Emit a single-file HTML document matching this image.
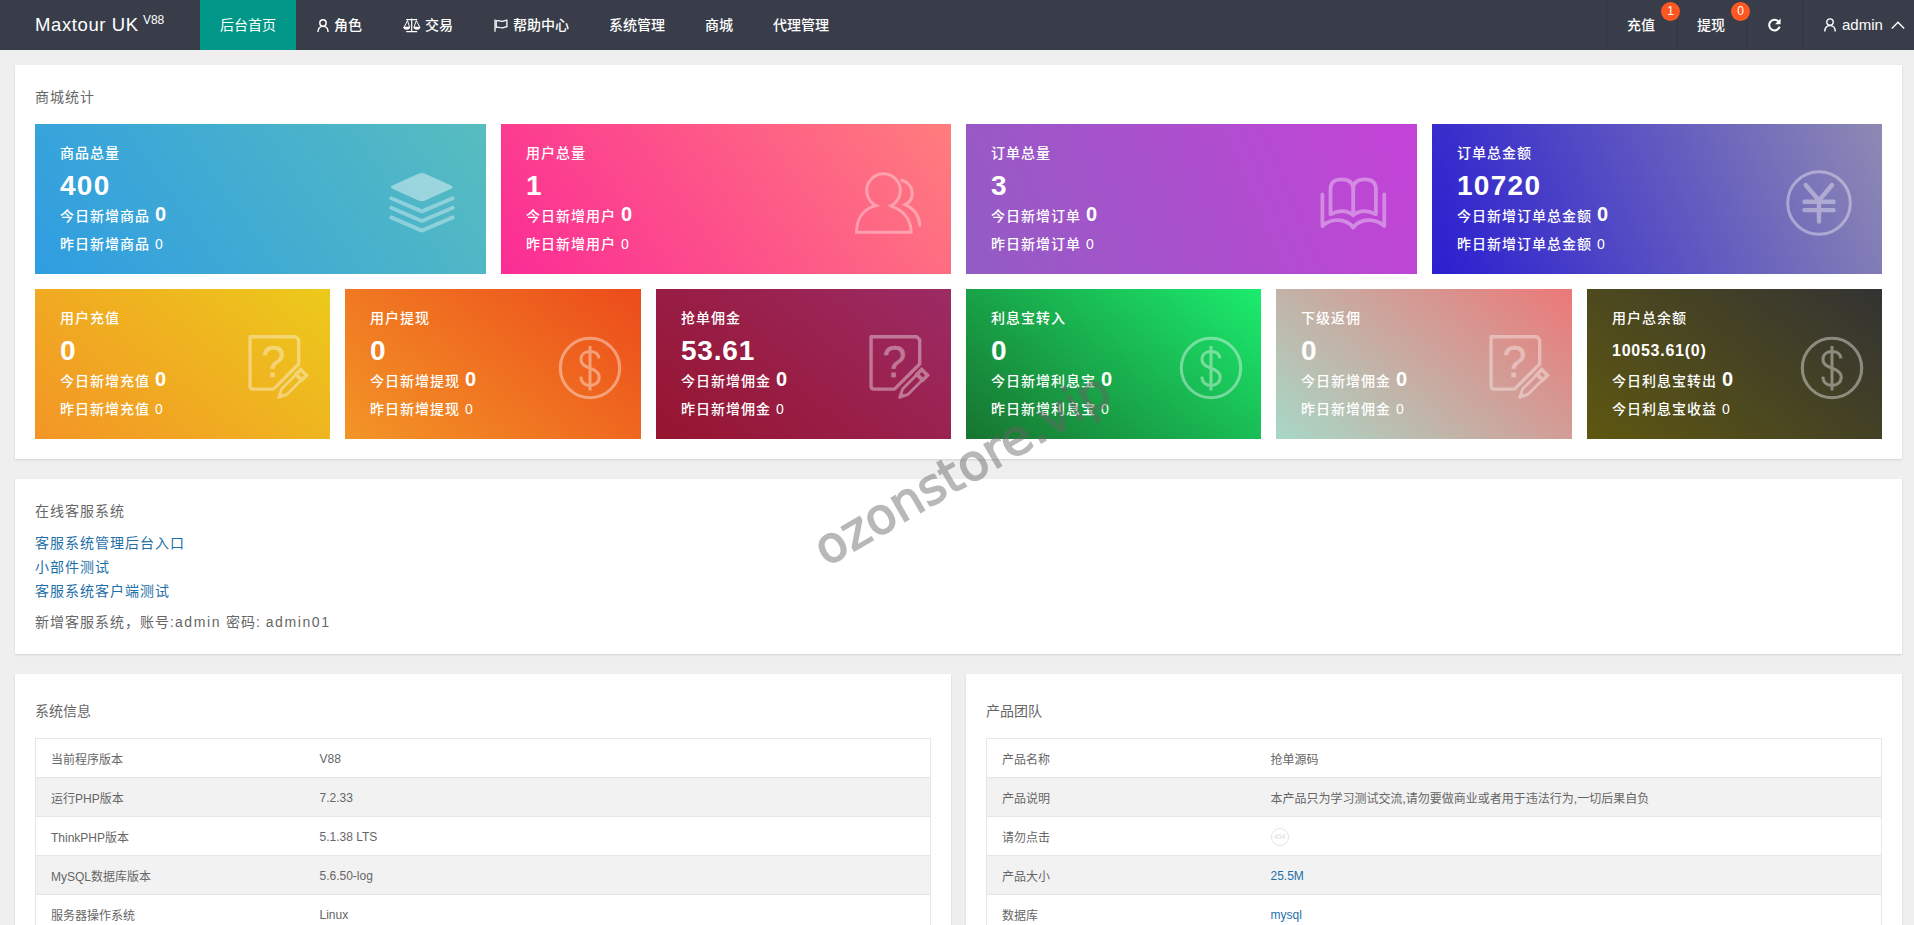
<!DOCTYPE html>
<html lang="zh-CN">
<head>
<meta charset="utf-8">
<title>Maxtour UK</title>
<style>
*{box-sizing:border-box;margin:0;padding:0}
html,body{width:1914px;height:925px;overflow:hidden}
body{background:#efefef;font-family:"Liberation Sans","Noto Sans CJK SC",sans-serif;font-size:14px;color:#666;position:relative}
a{color:#1e6fa8;text-decoration:none}
/* ---------- header ---------- */
.header{position:absolute;left:0;top:0;width:1914px;height:50px;background:#393d49;color:#fff}
.logo{position:absolute;left:35px;top:0;height:50px;line-height:49px;font-size:18.5px;letter-spacing:.6px;color:#fff;white-space:nowrap}
.logo sup{font-size:12px;position:relative;top:-7px;left:-1.5px;letter-spacing:0;vertical-align:baseline}
.nav{position:absolute;left:200px;top:0;height:50px;list-style:none;display:flex}
.nav li{height:50px;line-height:50px;padding:0 20px;font-size:14px;color:#fff;white-space:nowrap;display:flex;align-items:center}
.nav li{font-weight:500}
.nav li.on{background:#009688;font-weight:400}
.nav li svg{display:block;margin-right:5px}
.rnav{position:absolute;top:0;height:50px;line-height:50px;font-size:14px;color:#fff;white-space:nowrap}
.sep{position:absolute;top:0;width:1px;height:50px;background:#333641}
.badge{position:absolute;top:1.5px;width:19px;height:19px;border-radius:10px;z-index:2;background:#ff5722;color:#fff;font-size:12px;line-height:19px;text-align:center}
/* ---------- panels ---------- */
.panel{position:absolute;background:#fff;box-shadow:0 1px 2px rgba(0,0,0,.12)}
.ptitle{position:absolute;left:20px;font-size:14px;color:#666;white-space:nowrap}
.ls{letter-spacing:1px}
/* ---------- cards ---------- */
.card{position:absolute;height:150px;color:#fff;letter-spacing:1px;overflow:hidden}
.card div{position:absolute;left:25px;white-space:nowrap;font-size:14px;line-height:24px;font-weight:500}
.card .t{top:17px}
.card .n{top:44px;font-size:28px;line-height:36px;font-weight:bold;letter-spacing:1.3px}
.card .a{top:75px;line-height:30px}
.card .a b{font-size:20px;margin-left:0;letter-spacing:0}
.card .b{top:108px}
.card .b i{font-style:normal;margin-left:0}
.card svg{position:absolute}
/* ---------- tables ---------- */
table{position:absolute;left:20px;top:64px;width:896px;border-collapse:collapse;font-size:12px;color:#666}
td{height:39px;border:1px solid #e6e6e6;padding:0 15px;white-space:nowrap}
tr:nth-child(even) td{background:#f2f2f2}
td:first-child{width:269px;border-right:none}
td:last-child{border-left:none}
.l{position:relative;top:1px}
/* ---------- watermark ---------- */
.wm{position:absolute;left:662px;top:437px;width:600px;height:64px;line-height:64px;text-align:center;font-family:"DejaVu Sans","Liberation Sans",sans-serif;font-size:49.5px;font-weight:normal;color:#656565;-webkit-text-stroke:1.5px #656565;opacity:.46;transform:rotate(-30deg);transform-origin:50% 50%;white-space:nowrap}
</style>
</head>
<body>

<div class="header">
  <div class="logo">Maxtour UK <sup>V88</sup></div>
  <ul class="nav">
    <li class="on">后台首页</li>
    <li><svg width="12" height="13" viewBox="0 0 12 13.4" fill="none" stroke="#fff" stroke-width="1.45" style="margin-left:1.2px;margin-right:4.8px"><circle cx="6" cy="4.1" r="3.3"/><path d="M0.8 13.4C0.8 9.6 3 7.6 6 7.6C9 7.6 11.2 9.6 11.2 13.4"/></svg>角色</li>
    <li><svg width="18" height="15" viewBox="0 0 18 15" fill="none" stroke="#fff" stroke-width="1.2" style="margin-left:.8px;margin-right:4.2px"><path d="M8.7 1.2V13.6M3.2 13.7H14.2M3.2 1.6H14.2"/><circle cx="8.7" cy="1.3" r=".9" fill="#fff" stroke="none"/><path d="M4.5 2.6L1.2 9.2M4.5 2.6L6.6 9.2M13.3 2.6L11 9.2M13.3 2.6L16.8 9.2" stroke-width="1"/><path d="M0.2 8.8H7.2C7.2 10.6 5.8 11.7 3.7 11.7C1.6 11.7 0.2 10.6 0.2 8.8ZM10.4 8.8H17.4C17.4 10.6 16 11.7 13.9 11.7C11.8 11.7 10.4 10.6 10.4 8.8Z" fill="#fff" stroke="none"/></svg>交易</li>
    <li><svg width="14" height="13" viewBox="0 0 14 13" fill="none" stroke="#fff" stroke-width="1.3" style="margin-left:1px"><path d="M1 0.4V12.8"/><path d="M2.2 1.9C4.4 0.7 6 2.7 8.2 2.3C9.8 2 11.4 1.4 12.9 1.2V7.6C11.4 7.9 9.9 8.7 8.2 8.9C6 9.2 4.4 7.3 2.2 8.5Z"/></svg>帮助中心</li>
    <li>系统管理</li>
    <li>商城</li>
    <li>代理管理</li>
  </ul>
  <i class="sep" style="left:1606px"></i><i class="sep" style="left:1677px"></i><i class="sep" style="left:1746px"></i><i class="sep" style="left:1802px"></i>
  <div class="rnav" style="left:1627px;font-weight:500">充值</div><span class="badge" style="left:1661px">1</span>
  <div class="rnav" style="left:1697px;font-weight:500">提现</div><span class="badge" style="left:1731px">0</span>
  <svg style="position:absolute;left:1766.5px;top:18px" width="15" height="14" viewBox="0 0 15 14" fill="none"><path d="M11.4 3.5A5.3 5.3 0 1 0 12.6 8.6" stroke="#fff" stroke-width="2"/><path d="M13.6 0.6V6.2H8Z" fill="#fff"/></svg>
  <svg style="position:absolute;left:1824px;top:18px" width="12" height="14" viewBox="0 0 12 14" fill="none" stroke="#fff" stroke-width="1.4"><circle cx="6" cy="4.1" r="3.2"/><path d="M0.8 13.4C0.8 9.6 3 7.6 6 7.6C9 7.6 11.2 9.6 11.2 13.4"/></svg>
  <div class="rnav" style="left:1842px;font-size:15px;line-height:49px">admin</div>
  <svg style="position:absolute;left:1891px;top:21px" width="14" height="9" viewBox="0 0 14 9" fill="none" stroke="#fff" stroke-width="1.4"><path d="M0.8 7.6L7 1.2L13.2 7.6"/></svg>
</div>

<!-- panel 1 : 商城统计 -->
<div class="panel" style="left:15px;top:65px;width:1887px;height:394px">
  <div class="ptitle ls" style="top:20px;line-height:24px">商城统计</div>

  <div class="card" style="left:20px;top:59px;width:451px;background:linear-gradient(-125deg,#57bdbf,#2f9de2)">
    <svg style="left:354px;top:48.5px" width="66" height="60" viewBox="0 0 66 60" overflow="visible"><path d="M29.4 0.8Q32.8 -0.8 36.2 0.8L61.6 12.2Q65.8 14.1 61.6 16L36.2 27.5Q32.8 29 29.4 27.5L4 16Q-0.2 14.1 4 12.2Z" fill="#fff" fill-opacity=".43"/><path d="M2.2 25.2L32.8 38.4L63.8 25.2M2.2 34.8L32.8 48L63.8 34.8M2.2 44.4L32.8 57.6L63.8 44.4" fill="none" stroke="#fff" stroke-opacity=".36" stroke-width="3.9" stroke-linecap="round" stroke-linejoin="round"/></svg><div class="t">商品总量</div><div class="n">400</div><div class="a">今日新增商品 <b>0</b></div><div class="b">昨日新增商品 <i>0</i></div>
  </div>
  <div class="card" style="left:486px;top:59px;width:450px;background:linear-gradient(-125deg,#ff7d7d,#fb2c95)">
    <svg style="left:354px;top:47.5px;opacity:.36" width="68" height="64" viewBox="0 0 68 64" fill="none" stroke="#fff" stroke-width="3"><path d="M17.7 34.6C8 38.2 1.6 47 1.6 60.3H56.1C56.1 47 48 38.2 37.4 34.6L35.9 33.7A16.8 16.8 0 1 0 21.1 33.7Z" stroke-linejoin="miter"/><path d="M46.9 8.3C53 10 57.2 15 57.2 21.8C57.2 26.5 54.5 30.5 50.2 32.6C58 36 64 43 64.8 53.2" stroke-linecap="round"/></svg><div class="t">用户总量</div><div class="n">1</div><div class="a">今日新增用户 <b>0</b></div><div class="b">昨日新增用户 <i>0</i></div>
  </div>
  <div class="card" style="left:951px;top:59px;width:451px;background:linear-gradient(-113deg,#c543d8,#925cc3)">
    <svg style="left:354px;top:53px;opacity:.36" width="67" height="54" viewBox="0 0 67 54" fill="none" stroke="#fff" stroke-width="3.8" stroke-linecap="round" stroke-linejoin="round"><path d="M33.2 38.2Q24 30.5 10.5 37.2V12.4Q10.5 2.4 21.4 2.4Q33.2 2.4 33.2 12.4Q33.2 2.4 45 2.4Q55.9 2.4 55.9 12.4V37.2Q42.4 30.5 33.2 38.2V12.4"/><path d="M2.4 17.4V49C10 42 25 40 33.2 50.5C41.4 40 56.4 42 64.3 49V17.4"/></svg><div class="t">订单总量</div><div class="n">3</div><div class="a">今日新增订单 <b>0</b></div><div class="b">昨日新增订单 <i>0</i></div>
  </div>
  <div class="card" style="left:1417px;top:59px;width:450px;background:linear-gradient(-113deg,#8e8ab3,#2a1ed0)">
    <svg style="left:352px;top:43.6px;opacity:.38" width="70" height="70" viewBox="-35 -35 70 70" fill="none" stroke="#fff" stroke-linecap="round"><circle r="31.3" stroke-width="3"/><path d="M-13.3 -18L0 -2.5L13 -18M0 -2.5V18.6M-14.6 -1.2H14.6M-14.6 7.1H14.6" stroke-width="4.4"/></svg><div class="t">订单总金额</div><div class="n">10720</div><div class="a">今日新增订单总金额 <b>0</b></div><div class="b">昨日新增订单总金额 <i>0</i></div>
  </div>

  <div class="card" style="left:20px;top:224px;width:295px;background:linear-gradient(-141deg,#ecca1b,#f39526)">
    <svg style="left:211px;top:44px;opacity:.38" width="68" height="70" viewBox="0 0 68 70" fill="none" stroke="#fff" stroke-width="3.4"><path d="M4.05 3.8H49.7L52.7 6.7V31L27.5 56.1H7.2Q4.05 56.1 4.05 53V3.8Z" stroke-linejoin="round"/><text x="27.9" y="44.4" font-family="Liberation Sans,sans-serif" font-size="43.5" text-anchor="middle" fill="#fff" stroke="#fff" stroke-width=".3">?</text><g transform="translate(31.6 65.4) rotate(-45)"><path d="M1.5 0L9.5 -3.8H29.5V3.8H9.5Z" stroke-width="2.8" stroke-linejoin="round"/><path d="M0 0L6.5 -3V3Z" fill="#fff" stroke="none"/><path d="M30.2 -4.1H36.8V4.1H30.2Z" stroke-width="3.6" stroke-linejoin="miter"/></g></svg><div class="t">用户充值</div><div class="n">0</div><div class="a">今日新增充值 <b>0</b></div><div class="b">昨日新增充值 <i>0</i></div>
  </div>
  <div class="card" style="left:330px;top:224px;width:296px;background:linear-gradient(-141deg,#ec4b1b,#f39526)">
    <svg style="left:210.2px;top:44.1px;opacity:.40" width="70" height="70" viewBox="-35 -35 70 70" fill="none" stroke="#fff"><circle r="29.7" stroke-width="3.1"/><path d="M8.9 -9.6C8.3 -14.2 4.6 -16.4 0 -16.4C-5.3 -16.4 -9 -13.4 -9 -8.6C-9 -3.6 -4.6 -1.6 0 0.2C5 2.2 9.2 4.2 9.2 9.2C9.2 14.2 5.2 17.4 0 17.4C-5 17.4 -8.8 14.6 -9.2 8.6M0 -22V22.4" stroke-width="3"/></svg><div class="t">用户提现</div><div class="n">0</div><div class="a">今日新增提现 <b>0</b></div><div class="b">昨日新增提现 <i>0</i></div>
  </div>
  <div class="card" style="left:641px;top:224px;width:295px;background:linear-gradient(-141deg,#9c2b65,#96142f)">
    <svg style="left:211px;top:44px;opacity:.38" width="68" height="70" viewBox="0 0 68 70" fill="none" stroke="#fff" stroke-width="3.4"><path d="M4.05 3.8H49.7L52.7 6.7V31L27.5 56.1H7.2Q4.05 56.1 4.05 53V3.8Z" stroke-linejoin="round"/><text x="27.9" y="44.4" font-family="Liberation Sans,sans-serif" font-size="43.5" text-anchor="middle" fill="#fff" stroke="#fff" stroke-width=".3">?</text><g transform="translate(31.6 65.4) rotate(-45)"><path d="M1.5 0L9.5 -3.8H29.5V3.8H9.5Z" stroke-width="2.8" stroke-linejoin="round"/><path d="M0 0L6.5 -3V3Z" fill="#fff" stroke="none"/><path d="M30.2 -4.1H36.8V4.1H30.2Z" stroke-width="3.6" stroke-linejoin="miter"/></g></svg><div class="t">抢单佣金</div><div class="n" style="letter-spacing:.8px">53.61</div><div class="a">今日新增佣金 <b>0</b></div><div class="b">昨日新增佣金 <i>0</i></div>
  </div>
  <div class="card" style="left:951px;top:224px;width:295px;background:linear-gradient(-141deg,#1bec6e,#17742f)">
    <svg style="left:210.2px;top:44.1px;opacity:.40" width="70" height="70" viewBox="-35 -35 70 70" fill="none" stroke="#fff"><circle r="29.7" stroke-width="3.1"/><path d="M8.9 -9.6C8.3 -14.2 4.6 -16.4 0 -16.4C-5.3 -16.4 -9 -13.4 -9 -8.6C-9 -3.6 -4.6 -1.6 0 0.2C5 2.2 9.2 4.2 9.2 9.2C9.2 14.2 5.2 17.4 0 17.4C-5 17.4 -8.8 14.6 -9.2 8.6M0 -22V22.4" stroke-width="3"/></svg><div class="t">利息宝转入</div><div class="n">0</div><div class="a">今日新增利息宝 <b>0</b></div><div class="b">昨日新增利息宝 <i>0</i></div>
  </div>
  <div class="card" style="left:1261px;top:224px;width:296px;background:linear-gradient(-141deg,#ec7878,#a8d8c6)">
    <svg style="left:211px;top:44px;opacity:.38" width="68" height="70" viewBox="0 0 68 70" fill="none" stroke="#fff" stroke-width="3.4"><path d="M4.05 3.8H49.7L52.7 6.7V31L27.5 56.1H7.2Q4.05 56.1 4.05 53V3.8Z" stroke-linejoin="round"/><text x="27.9" y="44.4" font-family="Liberation Sans,sans-serif" font-size="43.5" text-anchor="middle" fill="#fff" stroke="#fff" stroke-width=".3">?</text><g transform="translate(31.6 65.4) rotate(-45)"><path d="M1.5 0L9.5 -3.8H29.5V3.8H9.5Z" stroke-width="2.8" stroke-linejoin="round"/><path d="M0 0L6.5 -3V3Z" fill="#fff" stroke="none"/><path d="M30.2 -4.1H36.8V4.1H30.2Z" stroke-width="3.6" stroke-linejoin="miter"/></g></svg><div class="t">下级返佣</div><div class="n">0</div><div class="a">今日新增佣金 <b>0</b></div><div class="b">昨日新增佣金 <i>0</i></div>
  </div>
  <div class="card" style="left:1572px;top:224px;width:295px;background:linear-gradient(-141deg,#333333,#5e5710)">
    <svg style="left:210.2px;top:44.1px;opacity:.40" width="70" height="70" viewBox="-35 -35 70 70" fill="none" stroke="#fff"><circle r="29.7" stroke-width="3.1"/><path d="M8.9 -9.6C8.3 -14.2 4.6 -16.4 0 -16.4C-5.3 -16.4 -9 -13.4 -9 -8.6C-9 -3.6 -4.6 -1.6 0 0.2C5 2.2 9.2 4.2 9.2 9.2C9.2 14.2 5.2 17.4 0 17.4C-5 17.4 -8.8 14.6 -9.2 8.6M0 -22V22.4" stroke-width="3"/></svg><div class="t">用户总余额</div><div class="n" style="font-size:16px;letter-spacing:.75px">10053.61(0)</div><div class="a">今日利息宝转出 <b>0</b></div><div class="b">今日利息宝收益 <i>0</i></div>
  </div>
</div>

<!-- panel 2 : 在线客服系统 -->
<div class="panel" style="left:15px;top:479px;width:1887px;height:175px">
  <div class="ptitle ls" style="top:20px;line-height:24px">在线客服系统</div>
  <div class="ptitle ls" style="top:52px;line-height:24px"><a>客服系统管理后台入口</a></div>
  <div class="ptitle ls" style="top:76px;line-height:24px"><a>小部件测试</a></div>
  <div class="ptitle ls" style="top:100px;line-height:24px"><a>客服系统客户端测试</a></div>
  <div class="ptitle ls" style="top:131px;line-height:24px">新增客服系统，账号:<span style="letter-spacing:1.6px">admin</span> 密码: <span style="letter-spacing:1.6px">admin01</span></div>
</div>

<!-- panel 3 : 系统信息 -->
<div class="panel" style="left:15px;top:674px;width:936px;height:300px">
  <div class="ptitle" style="top:20px;line-height:35px">系统信息</div>
  <table>
    <tr><td>当前程序版本</td><td><span class="l">V88</span></td></tr>
    <tr><td>运行PHP版本</td><td><span class="l">7.2.33</span></td></tr>
    <tr><td>ThinkPHP版本</td><td><span class="l">5.1.38 LTS</span></td></tr>
    <tr><td>MySQL数据库版本</td><td><span class="l">5.6.50-log</span></td></tr>
    <tr><td>服务器操作系统</td><td><span class="l">Linux</span></td></tr>
    <tr><td>WEB运行环境</td><td><span class="l">fpm-fcgi</span></td></tr>
  </table>
</div>

<!-- panel 4 : 产品团队 -->
<div class="panel" style="left:966px;top:674px;width:936px;height:300px">
  <div class="ptitle" style="top:20px;line-height:35px">产品团队</div>
  <table>
    <tr><td>产品名称</td><td>抢单源码</td></tr>
    <tr><td>产品说明</td><td>本产品只为学习测试交流,请勿要做商业或者用于违法行为,一切后果自负</td></tr>
    <tr><td>请勿点击</td><td><span style="display:inline-block;width:18px;height:18px;border:1px solid #e4e4e4;border-radius:9px;font-size:7px;line-height:16px;text-align:center;color:#ddd;vertical-align:middle;position:relative;top:1px">404</span></td></tr>
    <tr><td>产品大小</td><td><a class="l">25.5M</a></td></tr>
    <tr><td>数据库</td><td><a class="l">mysql</a></td></tr>
    <tr><td>备注</td><td>-</td></tr>
  </table>
</div>

<div class="wm">ozonstore.vip</div>

</body>
</html>
